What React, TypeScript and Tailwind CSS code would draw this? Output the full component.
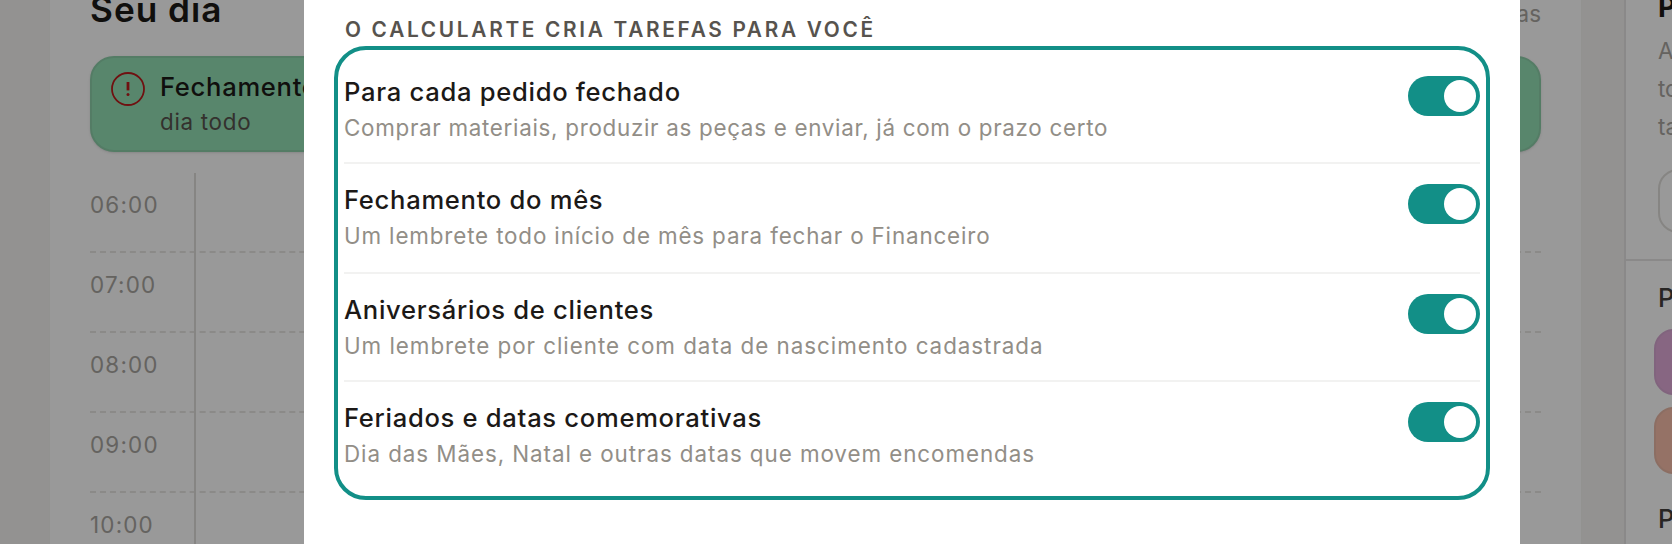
const rows = [
  {
    title: "Para cada pedido fechado",
    desc: "Comprar materiais, produzir as peças e enviar, já com o prazo certo",
    height: "h-[108px]",
    spacing: "tracking-[0.7px]",
  },
  {
    title: "Fechamento do mês",
    desc: "Um lembrete todo início de mês para fechar o Financeiro",
    height: "h-[110px]",
    spacing: "tracking-[0.85px]",
  },
  {
    title: "Aniversários de clientes",
    desc: "Um lembrete por cliente com data de nascimento cadastrada",
    height: "h-[108px]",
    spacing: "tracking-[0.96px]",
  },
  {
    title: "Feriados e datas comemorativas",
    desc: "Dia das Mães, Natal e outras datas que movem encomendas",
    height: "h-[108px]",
    spacing: "tracking-[0.93px]",
  },
];

const hours = ["06:00", "07:00", "08:00", "09:00", "10:00"];

function Toggle() {
  return (
    <div className="flex h-10 w-[72px] shrink-0 items-center justify-end rounded-full bg-[#128f87] p-1">
      <div className="size-8 rounded-full bg-white" />
    </div>
  );
}

function Row({
  title,
  desc,
  height,
  spacing,
  last,
}: {
  title: string;
  desc: string;
  height: string;
  spacing: string;
  last?: boolean;
}) {
  return (
    <div className={`flex ${height} items-start justify-between pt-5 ${last ? "" : "border-b-2 border-[#f2f2f1]"}`}>
      <div className="-mt-[2px]">
        <div className="text-[25.6px] leading-[36px] font-medium tracking-[0.7px] text-[#1c1917]">{title}</div>
        <div className={`mt-[3px] text-[22.4px] leading-[30px] text-[#928e87] ${spacing}`}>{desc}</div>
      </div>
      <Toggle />
    </div>
  );
}

function DayColumn() {
  return (
    <div className="w-[1533px] shrink-0 border-x border-[#f4f3f1] bg-white pl-10 pr-10">
      <div className="-mt-[13px] flex items-baseline justify-between">
        <h1 className="text-[35.2px] leading-[44px] font-semibold tracking-[1px] text-[#1c1917]">Seu dia</h1>
        <span className="text-[22.4px] text-[#a8a5a0]">tarefas</span>
      </div>
      <div className="mt-[25px] flex h-[96px] gap-3.5 rounded-[24px] border-2 border-[#8ccfa9] bg-[#93e0b5] px-[18px] pt-[13px] shadow-sm">
        <svg width="36" height="36" viewBox="0 0 36 36" className="shrink-0" fill="none">
          <circle cx="18" cy="18" r="16" stroke="#b91c1c" strokeWidth="1.8" />
          <path d="M18 11v8.4" stroke="#b91c1c" strokeWidth="2.8" />
          <circle cx="18" cy="23.6" r="1.5" fill="#b91c1c" />
        </svg>
        <div className="-mt-[2px]">
          <div className="text-[25.6px] leading-[36px] font-medium tracking-[0.7px] text-[#1c1917]">Fechamento do mês</div>
          <div className="mt-[2px] text-[22.4px] leading-[30px] tracking-[0.7px] text-[#57534e]">dia todo</div>
        </div>
      </div>
      <div className="relative mt-[21px]">
        <div className="absolute top-0 bottom-0 left-[104px] w-0.5 bg-[#e0deda]" />
        {hours.map((h) => (
          <div
            key={h}
            className="flex h-20 items-center border-b-2 border-dashed border-[#e8e6e3] pb-[14px] text-[22.4px] tracking-[1.2px] text-[#a8a5a0]"
          >
            {h}
          </div>
        ))}
      </div>
    </div>
  );
}

function RightPanel() {
  return (
    <div className="w-[400px] shrink-0 border-l-2 border-[#e7e5e4] bg-white">
      <div className="flex h-[261px] flex-col border-b-2 border-[#e7e5e4] pl-[32px]">
        <div className="-mt-[14px] text-[28px] font-bold text-[#1c1917]">Próximos</div>
        <div className="mt-[4px] text-[22.4px] leading-[38px] text-[#a8a5a0]">
          <div>As tarefas</div>
          <div>todas as</div>
          <div>tarefas</div>
        </div>
        <div className="mt-[23px] h-[64px] w-[200px] rounded-[20px] border-2 border-[#e0deda]" />
      </div>
      <div className="pl-7">
        <div className="pl-1 pt-[19px] text-[25.6px] leading-9 font-medium text-[#44403c]">Pedidos</div>
        <div className="mt-[13px] flex flex-col gap-3">
          <div className="h-[66px] w-[200px] rounded-[20px] border-2 border-[#d8a7d2] bg-[#e2abd9]" />
          <div className="h-[67px] w-[200px] rounded-[20px] border-2 border-[#eab8a6] bg-[#f8bfaa]" />
        </div>
        <div className="pl-1 pt-[27px] text-[25.6px] leading-9 font-medium text-[#44403c]">Pagamentos</div>
      </div>
    </div>
  );
}

export default function App() {
  return (
    <div className="relative flex h-[544px] w-[1672px] overflow-hidden bg-[#f5f4f2] font-['Inter',sans-serif]">
      <div className="w-[49px] shrink-0" />
      <DayColumn />
      <div className="w-[42px] shrink-0" />
      <RightPanel />

      <div className="absolute inset-0 bg-black/40" />

      <div className="absolute top-0 bottom-0 left-[304px] w-[1216px] bg-white px-[30px]">
        <div className="h-[46px] pl-[11px] pt-[16px] text-[20.8px] leading-[28px] font-semibold tracking-[2.7px] whitespace-nowrap text-[#57534e] uppercase">
          O Calcularte cria tarefas para você
        </div>
        <div className="h-[454px] rounded-[32px] border-4 border-[#128f87] p-[6px]">
          {rows.map((r, i) => (
            <Row key={r.title} {...r} last={i === rows.length - 1} />
          ))}
        </div>
      </div>
    </div>
  );
}
